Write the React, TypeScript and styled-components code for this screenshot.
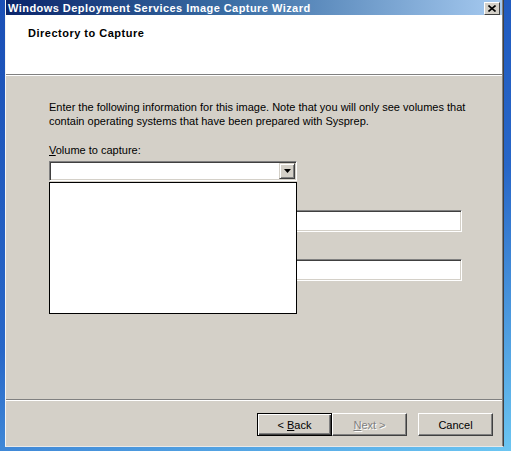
import styled, { createGlobalStyle } from "styled-components";

const GlobalStyle = createGlobalStyle`
  html, body {
    margin: 0;
    padding: 0;
  }
  body {
    font-family: "Liberation Sans", Arial, sans-serif;
    font-size: 11px;
    color: #000;
  }
`;

const Desktop = styled.div`
  width: 511px;
  height: 451px;
  overflow: hidden;
  background: linear-gradient(160deg, #1a4fb6 0%, #2766c8 55%, #6cc6f2 100%);
`;

const Window = styled.div`
  margin-left: 5px;
  width: 499px;
  height: 447px;
  box-sizing: border-box;
  background: #d4d0c8;
  border-left: 1px solid #f4f4f4;
  border-right: 1px solid #404040;
  border-bottom: 1px solid #e8e8e8;
  box-shadow: inset -1px 0 0 #808080;
  display: flex;
  flex-direction: column;
`;

const TitleBar = styled.div`
  height: 15px;
  margin-right: 1px;
  display: flex;
  align-items: center;
  justify-content: space-between;
  padding: 0 2px 0 2px;
  background: linear-gradient(90deg, #0a246a 0%, #3a6ea5 45%, #a6caf0 100%);
  color: #fff;
  font-weight: bold;
  font-size: 11px;
  letter-spacing: 0.45px;
  white-space: nowrap;
`;

const CloseButton = styled.div`
  width: 16px;
  height: 13px;
  box-sizing: border-box;
  margin-top: 1px;
  background: #d4d0c8;
  border: 1px solid;
  border-color: #fff #404040 #404040 #fff;
  display: flex;
  align-items: center;
  justify-content: center;
`;

const Header = styled.div`
  height: 59px;
  margin-right: 1px;
  box-sizing: border-box;
  background: #fff;
  padding: 12px 0 0 22px;
  font-weight: bold;
  font-size: 11px;
  letter-spacing: 0.5px;
`;

const Separator = styled.div`
  height: 1px;
  background: #808080;
  border-bottom: 1px solid #fff;
  margin-right: 1px;
`;

const Content = styled.div`
  flex: 1;
  padding: 24px 0 0 43px;
`;

const Paragraph = styled.p`
  margin: 0;
  line-height: 14px;
  width: 430px;
`;

const Label = styled.div<{ $gap: number }>`
  margin-top: ${(p) => p.$gap}px;
  line-height: 14px;
  height: 14px;
`;

const Combo = styled.div`
  position: relative;
  margin-top: 4px;
  width: 248px;
  height: 20px;
  box-sizing: border-box;
  background: #fff;
  border: 1px solid;
  border-color: #808080 #fff #fff #808080;
  box-shadow: inset 1px 1px 0 #404040, inset -1px -1px 0 #d4d0c8;
  display: flex;
  justify-content: flex-end;
  padding: 1px;
`;

const ComboButton = styled.div`
  width: 16px;
  height: 16px;
  box-sizing: border-box;
  background: #d4d0c8;
  border: 1px solid;
  border-color: #d4d0c8 #404040 #404040 #d4d0c8;
  box-shadow: inset 1px 1px 0 #fff, inset -1px -1px 0 #808080;
  display: flex;
  align-items: center;
  justify-content: center;
`;

const DropList = styled.div`
  position: absolute;
  top: 20px;
  left: -1px;
  width: 248px;
  height: 132px;
  box-sizing: border-box;
  background: #fff;
  border: 1px solid #000;
  z-index: 2;
`;

const Field = styled.div`
  margin-top: 4px;
  width: 413px;
  height: 22px;
  box-sizing: border-box;
  background: #fff;
  border: 1px solid;
  border-color: #808080 #fff #fff #808080;
  box-shadow: inset 1px 1px 0 #404040, inset -1px -1px 0 #d4d0c8;
`;

const Footer = styled.div`
  display: flex;
  flex-direction: column;
`;

const ButtonRow = styled.div`
  display: flex;
  justify-content: flex-end;
  padding: 12px 10px 10px 0;
`;

const Button = styled.div<{ $default?: boolean; $disabled?: boolean; $gap?: number }>`
  width: 75px;
  height: 23px;
  box-sizing: border-box;
  margin-left: ${(p) => p.$gap ?? 0}px;
  background: #d4d0c8;
  border: 1px solid;
  border-color: ${(p) => (p.$default ? "#000" : "#fff #404040 #404040 #fff")};
  box-shadow: ${(p) =>
    p.$default
      ? "inset 1px 1px 0 #fff, inset -1px -1px 0 #404040, inset -2px -2px 0 #808080"
      : "inset -1px -1px 0 #808080"};
  display: flex;
  align-items: center;
  justify-content: center;
  color: ${(p) => (p.$disabled ? "#808080" : "#000")};
  text-shadow: ${(p) => (p.$disabled ? "1px 1px 0 #fff" : "none")};
  white-space: pre;
`;

export default function App() {
  return (
    <>
      <GlobalStyle />
      <Desktop>
        <Window>
          <TitleBar>
            <span>Windows Deployment Services Image Capture Wizard</span>
            <CloseButton>
              <svg width="8" height="7" viewBox="0 0 8 7">
                <path d="M0.5 0.5 L7.5 6.5 M7.5 0.5 L0.5 6.5" stroke="#000" strokeWidth="1.6" />
              </svg>
            </CloseButton>
          </TitleBar>
          <Header>Directory to Capture</Header>
          <Separator />
          <Content>
            <Paragraph>
              Enter the following information for this image. Note that you will only see volumes that
              contain operating systems that have been prepared with Sysprep.
            </Paragraph>
            <Label $gap={15}>
              <u>V</u>olume to capture:
            </Label>
            <Combo>
              <ComboButton>
                <svg width="7" height="4" viewBox="0 0 7 4">
                  <path d="M0 0 H7 L3.5 4 Z" fill="#000" />
                </svg>
              </ComboButton>
              <DropList />
            </Combo>
            <Label $gap={11}>
              Image <u>n</u>ame:
            </Label>
            <Field />
            <Label $gap={9}>
              Image <u>d</u>escription:
            </Label>
            <Field />
          </Content>
          <Footer>
            <Separator />
            <ButtonRow>
              <Button $default>
                <span>
                  {"< "}
                  <u>B</u>ack
                </span>
              </Button>
              <Button $disabled>
                <span>
                  <u>N</u>
                  {"ext >"}
                </span>
              </Button>
              <Button $gap={11}>Cancel</Button>
            </ButtonRow>
          </Footer>
        </Window>
      </Desktop>
    </>
  );
}
